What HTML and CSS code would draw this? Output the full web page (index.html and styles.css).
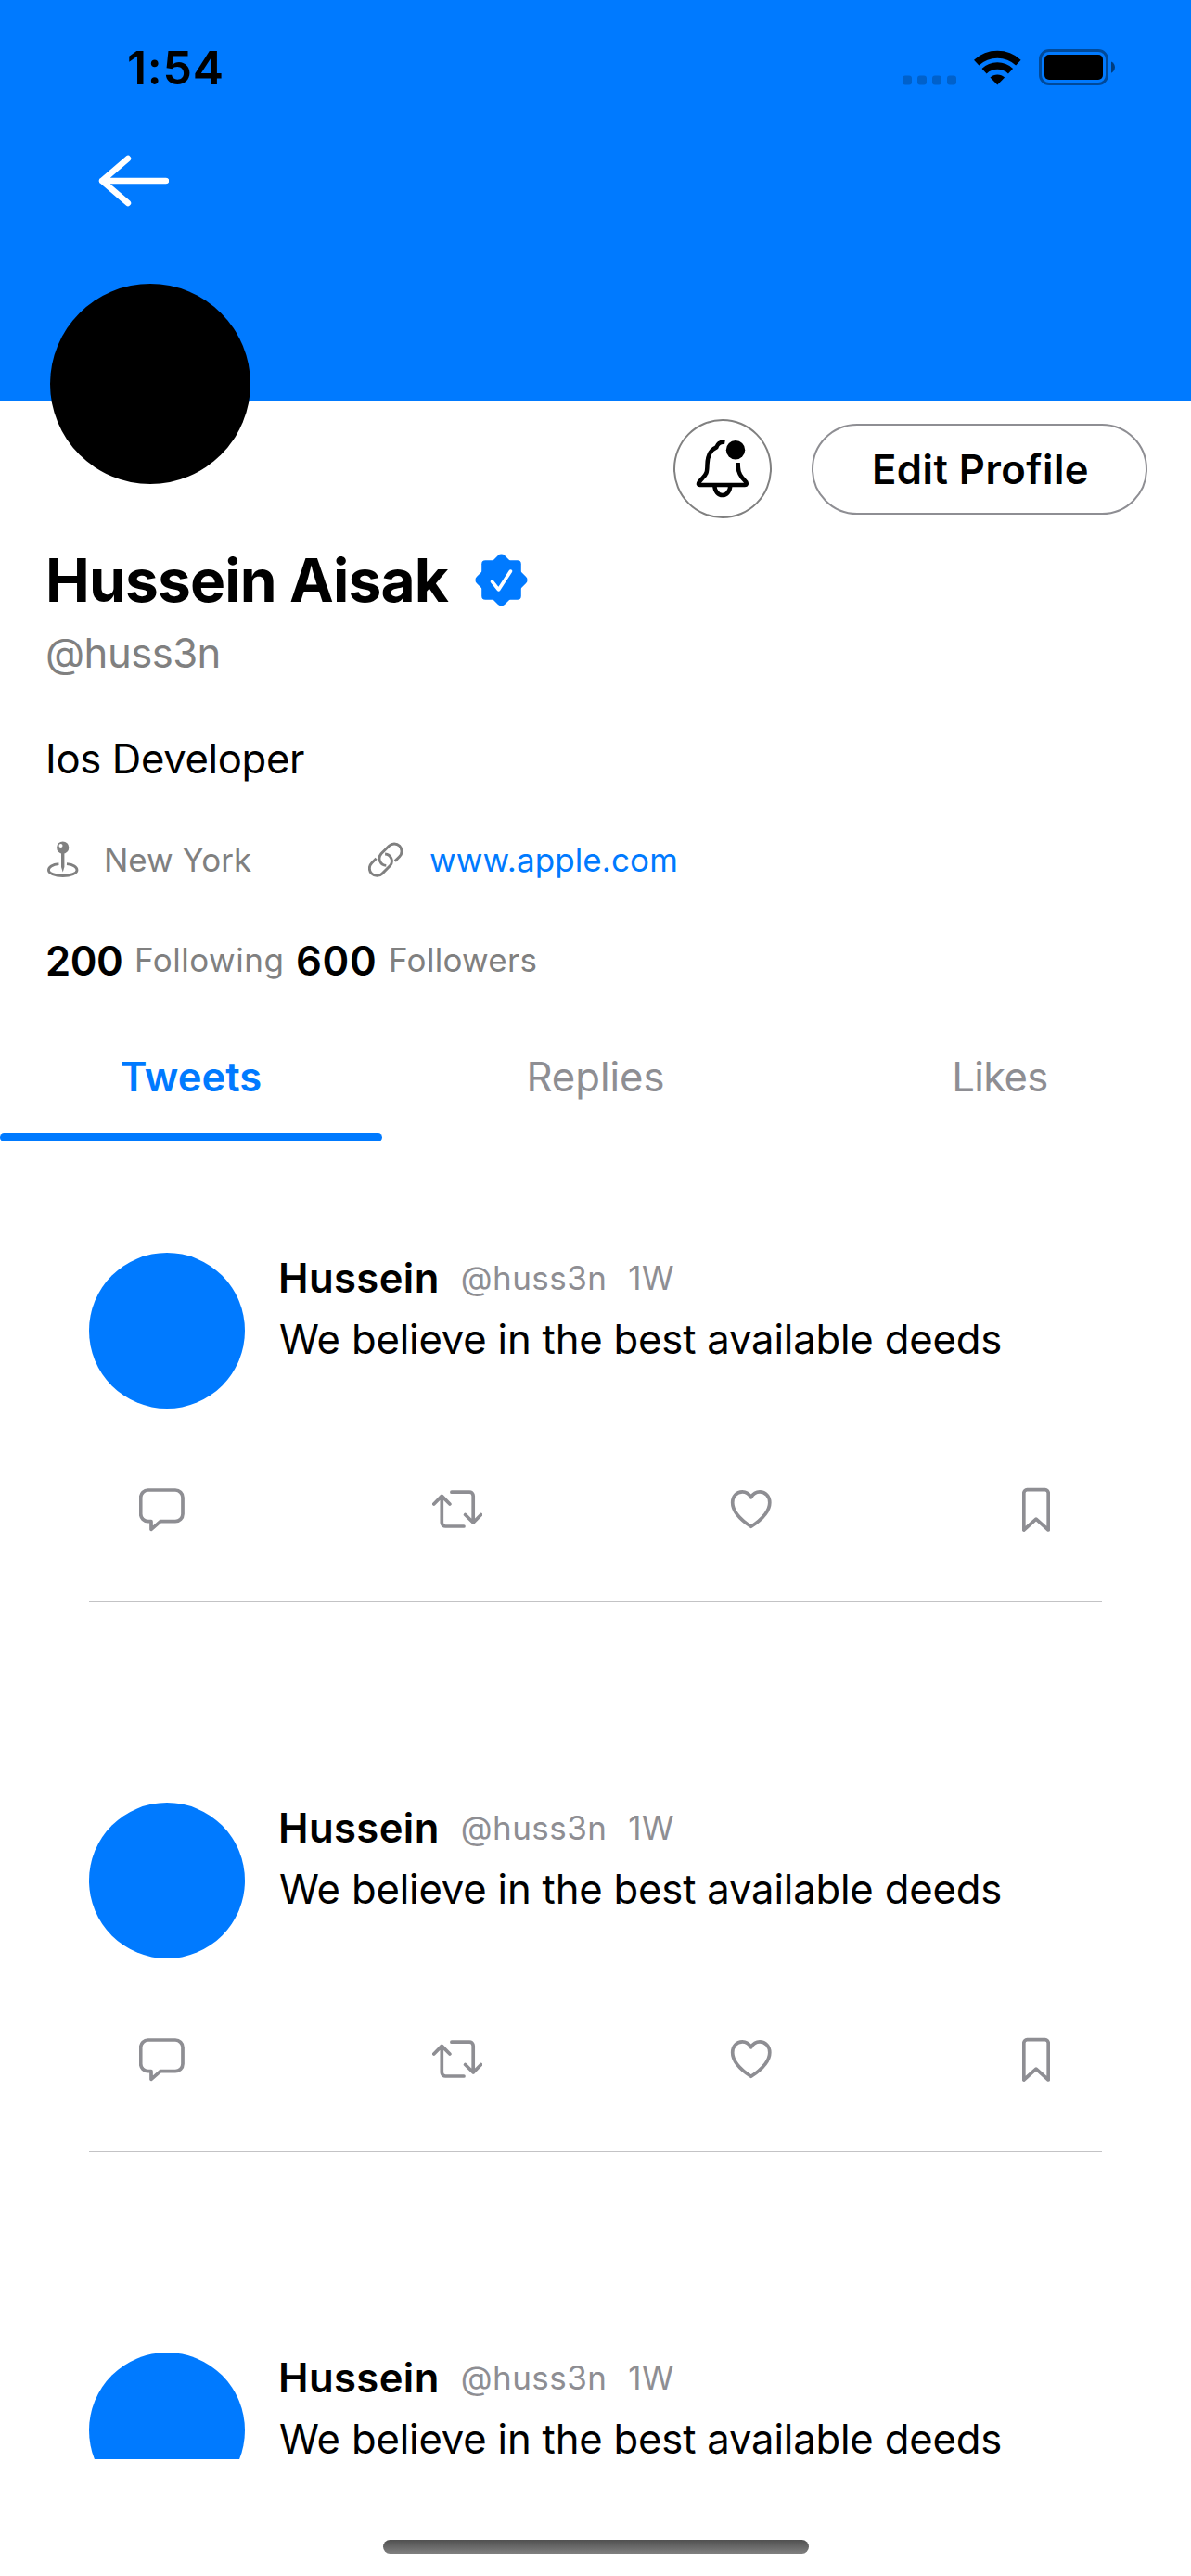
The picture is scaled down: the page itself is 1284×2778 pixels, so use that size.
FILE: index.html
```html
<!DOCTYPE html>
<html lang="en">
<head>
<meta charset="utf-8">
<title>Hussein Aisak</title>
<link rel="stylesheet" href="styles.css">
</head>
<body>
<svg class="defs" width="0" height="0" aria-hidden="true">
  <symbol id="reply" viewBox="0 0 49 48"><path d="M9.7 3H39a8 8 0 0 1 8 8V28.7a8 8 0 0 1-8 8H23L13 45.3V36.7H9.7a8 8 0 0 1-8-8V11a8 8 0 0 1 8-8Z"/></symbol>
  <symbol id="retweet" viewBox="0 0 54 48"><path d="M1.8 18 10.3 9.4 18.9 18M10.3 10V38a4 4 0 0 0 4 4H34M20.9 5.2H40.2a4 4 0 0 1 4 4V38M35.6 29.5 44.2 38 52.6 29.5"/></symbol>
  <symbol id="heart" viewBox="0 0 48 48"><path d="M22.7 10.8C20.5 7 17 4.9 13.3 4.9C7 4.9 2.7 9.8 2.7 16.4C2.7 26 11 34.5 22.7 42.3C34.4 34.5 42.8 26 42.8 16.4C42.8 9.8 38.4 4.9 32.1 4.9C28.4 4.9 24.9 7 22.7 10.8Z"/></symbol>
  <symbol id="bookmark" viewBox="0 0 30 48"><path d="M5.3 2.7H24.7a3.5 3.5 0 0 1 3.5 3.5V46L15 34.2 1.8 46V6.2A3.5 3.5 0 0 1 5.3 2.7Z"/></symbol>
</svg>
<main class="screen">
  <header class="banner">
    <div class="status">
      <span class="time">1:54</span>
      <svg class="dots" width="58" height="38" viewBox="0 0 58 38"><rect y="27.5" width="10" height="10" rx="3"/><rect x="16" y="27.5" width="10" height="10" rx="3"/><rect x="32" y="27.5" width="10" height="10" rx="3"/><rect x="48" y="27.5" width="10" height="10" rx="3"/></svg>
      <svg width="51" height="38" viewBox="0 0 51 38"><g fill="none" stroke="#000"><path stroke-width="8" d="M2.7 13.6A33.3 33.3 0 0 1 47.9 13.6"/><path stroke-width="7.4" d="M11.1 22.7A20.6 20.6 0 0 1 39.5 22.7"/></g><path d="M25.3 37.5 17.5 29.6A11.2 11.2 0 0 1 33.1 29.6Z"/></svg>
      <svg width="82" height="39" viewBox="0 0 82 39"><rect x="1.5" y="1.5" width="72" height="36" rx="9.5" fill="none" stroke="#000" stroke-width="3" opacity=".4"/><rect x="6" y="6" width="63" height="27" rx="5"/><path d="M78 13.5C83.3 15.5 83.3 23.5 78 25.7Z" opacity=".5"/></svg>
    </div>
    <div class="nav">
      <svg width="76" height="56" viewBox="0 0 76 56"><path d="M32 4 4 28 32 52M4 28H73" fill="none" stroke="#fff" stroke-width="6.4" stroke-linecap="round" stroke-linejoin="round"/></svg>
    </div>
  </header>

  <section class="actions-bar">
    <div class="avatar"></div>
    <button class="bell" aria-label="Notifications">
      <svg width="106" height="107" viewBox="0 0 106 107"><g fill="none" stroke="#000" stroke-width="4.5"><path d="M55.4 25C50.5 24.2 48 26 46.3 30.4C39 33.5 36.7 40 36.5 49C36.3 57 36 59 31.5 63.5L27.8 67.7C26.3 70 27 71 28.5 71H77C78.8 71 79.3 69.7 78.2 67.7L74 63C70 58 69.8 54 69.6 47"/><path d="M44.3 71.5C44.8 85.5 60.9 85.5 61.3 71.5"/></g><circle cx="67" cy="33.3" r="10.2"/></svg>
    </button>
    <button class="edit">Edit Profile</button>
  </section>

  <section class="profile">
    <div class="name-row">
      <h1 class="name">Hussein Aisak</h1>
      <svg width="57" height="57" viewBox="-28.5 -28.5 57 57"><g fill="#007aff"><rect x="-21.3" y="-21.3" width="42.6" height="42.6" rx="4"/><rect x="-21.3" y="-21.3" width="42.6" height="42.6" rx="5" transform="rotate(45)"/></g><path d="M-10 1.6-3 10.4 10-9.4" fill="none" stroke="#fff" stroke-width="3.7" stroke-linecap="round" stroke-linejoin="round"/></svg>
    </div>
    <div class="handle">@huss3n</div>
    <div class="bio">Ios Developer</div>
    <div class="meta">
      <svg width="34" height="40" viewBox="0 0 34 40"><path d="M21 24.7C28 25.2 32 28 32 31.2C32 34.7 25.5 37.5 16.7 37.5S1.4 34.7 1.4 31.2C1.4 28 5.5 25.2 12.400 24.7" fill="none" stroke="#808080" stroke-width="2.8"/><path d="M15 12H18.4V28L16.7 33.5 15 28Z" fill="#808080"/><circle cx="16.7" cy="7" r="6.6" fill="#808080"/><circle cx="14.500" cy="5" r="2" fill="#fff"/></svg>
      <span class="place">New York</span>
      <svg width="38" height="39" viewBox="0 0 38 39"><path d="M28.8 20.6 33.7 15.7A8 8 0 0 0 22.4 4.3L13.9 12.8A7.6 7.6 0 0 0 19.3 25.4M8.6 17.8 3.7 22.7A8 8 0 0 0 15 34.1L23.5 25.6A7.6 7.6 0 0 0 18.1 13" fill="none" stroke="#808080" stroke-width="2.9"/></svg>
      <a class="site">www.apple.com</a>
    </div>
    <div class="stats">
      <b class="n200">200</b><span class="following">Following</span><b class="n600">600</b><span class="followers">Followers</span>
    </div>
  </section>

  <nav class="tabs">
    <div class="tab on">Tweets</div>
    <div class="tab">Replies</div>
    <div class="tab likes">Likes</div>
  </nav>
  <div class="rule"></div>

  <section class="feed">
    <article class="tweet">
      <div class="head">
        <div class="pic"></div>
        <div>
          <div class="by"><b>Hussein</b><span class="at">@huss3n</span><span class="ago">1W</span></div>
          <p class="text">We believe in the best available deeds</p>
        </div>
      </div>
      <div class="icons">
        <svg width="49" height="48"><use href="#reply"/></svg>
        <svg width="54" height="48"><use href="#retweet"/></svg>
        <svg width="48" height="48"><use href="#heart"/></svg>
        <svg width="30" height="48"><use href="#bookmark"/></svg>
      </div>
    </article>
    <article class="tweet">
      <div class="head">
        <div class="pic"></div>
        <div>
          <div class="by"><b>Hussein</b><span class="at">@huss3n</span><span class="ago">1W</span></div>
          <p class="text">We believe in the best available deeds</p>
        </div>
      </div>
      <div class="icons">
        <svg width="49" height="48"><use href="#reply"/></svg>
        <svg width="54" height="48"><use href="#retweet"/></svg>
        <svg width="48" height="48"><use href="#heart"/></svg>
        <svg width="30" height="48"><use href="#bookmark"/></svg>
      </div>
    </article>
    <article class="tweet last">
      <div class="head">
        <div class="pic"></div>
        <div>
          <div class="by"><b>Hussein</b><span class="at">@huss3n</span><span class="ago">1W</span></div>
          <p class="text">We believe in the best available deeds</p>
        </div>
      </div>
    </article>
  </section>
  <div class="home"></div>
</main>
</body>
</html>
```
FILE: styles.css
```css
* { box-sizing: border-box; }
body { margin: 0; background: #fff; }
svg { display: block; flex: none; }
.defs { display: none; }
h1, p { margin: 0; font-weight: inherit; }
b { font-weight: 600; }

.screen {
  width: 1284px;
  height: 2778px;
  overflow: hidden;
  font-family: Inter, "Liberation Sans", sans-serif;
  font-size: 43.6px;
  color: #000;
  white-space: nowrap;
}

.banner { height: 432px; background: #007aff; }
.status {
  display: flex;
  align-items: center;
  gap: 19px;
  height: 145px;
  padding: 0 82px 0 137px;
}
.time { margin-right: auto; font-size: 50px; font-weight: 600; letter-spacing: 0.7px; }
.dots { opacity: 0.2; }
.nav { display: flex; align-items: center; height: 100px; padding-left: 106px; }

.actions-bar {
  display: flex;
  align-items: center;
  height: 148px;
  padding: 0 47px 0 54px;
}
.avatar {
  align-self: flex-start;
  width: 216px;
  height: 216px;
  margin: -126px auto 0 0;
  border-radius: 50%;
  background: #000;
}
button {
  display: grid;
  place-items: center;
  padding: 0;
  font: inherit;
  color: inherit;
  background: none;
}
.bell {
  width: 106px;
  height: 107px;
  margin: 0 43px 1px 0;
  border: 2px solid #808080;
  border-radius: 50%;
}
.bell svg { margin: -2px; }
.edit {
  width: 362px;
  height: 98px;
  padding-left: 2px;
  border: 2px solid #8e8e93;
  border-radius: 49px;
  font-weight: 600;
  letter-spacing: 0.5px;
}

.profile { padding: 6px 49px 0; }
.name-row { display: flex; align-items: center; gap: 29px; height: 79px; }
.name { font-size: 64px; font-weight: 700; letter-spacing: -0.86px; }
.handle { padding-top: 1px; line-height: 78px; letter-spacing: -0.5px; color: #808080; }
.bio { line-height: 150px; letter-spacing: -0.33px; }
.meta {
  display: flex;
  align-items: center;
  height: 66px;
  padding-left: 2px;
  font-size: 35px;
}
.place { margin: 0 126px 0 27px; letter-spacing: -0.07px; color: #808080; }
.site { margin-left: 28px; letter-spacing: 0.1px; color: #007aff; }
.stats { display: flex; align-items: center; gap: 12.6px; height: 152px; }
.n200 { letter-spacing: -0.46px; }
.n600 { letter-spacing: 0.68px; }
.following, .followers { padding-bottom: 2px; font-size: 35px; color: #808080; }
.following { letter-spacing: 0.52px; }
.followers { letter-spacing: 0.29px; }

.tabs { display: grid; grid-template-columns: repeat(3, 412px); gap: 24px; height: 119px; }
.tab { line-height: 100px; text-align: center; color: #8e8e93; }
.tab.on { font-weight: 600; color: #007aff; }
.tab.on::after {
  content: "";
  display: block;
  height: 9px;
  margin-top: 10px;
  border-radius: 5px;
  background: #007aff;
}
.likes { letter-spacing: -0.64px; }
.rule { position: relative; height: 1px; margin-top: -1px; background: rgba(60, 60, 67, 0.3); }

.feed { height: 1421px; padding: 0 96px; }
.tweet { height: 497px; margin-bottom: 96px; padding-top: 120px; border-bottom: 1px solid #c3c3c5; }
.head { display: flex; gap: 36px; }
.pic { width: 168px; height: 168px; border-radius: 50%; background: #007aff; }
.last { height: 235px; margin-bottom: 0; border-bottom: 0; }
/* the list ends partway down the third tweet */
.last .pic { clip-path: inset(0 0 53px 0); }
.by { display: flex; align-items: center; gap: 23px; height: 54px; letter-spacing: 0.4px; }
.at, .ago { font-size: 35px; letter-spacing: 0.45px; color: #8e8e93; }
.text { padding-left: 1px; line-height: 80px; letter-spacing: -0.18px; }
.icons {
  display: flex;
  justify-content: space-between;
  margin-top: 85px;
  padding: 0 56px 0 54px;
  fill: none;
  stroke: #8e8e93;
  stroke-width: 3.7;
  stroke-linecap: round;
  stroke-linejoin: round;
}

.home {
  width: 459px;
  height: 15px;
  margin: 87px 0 0 413px;
  border-radius: 8px;
  background: linear-gradient(#505050, #808080);
}
```
